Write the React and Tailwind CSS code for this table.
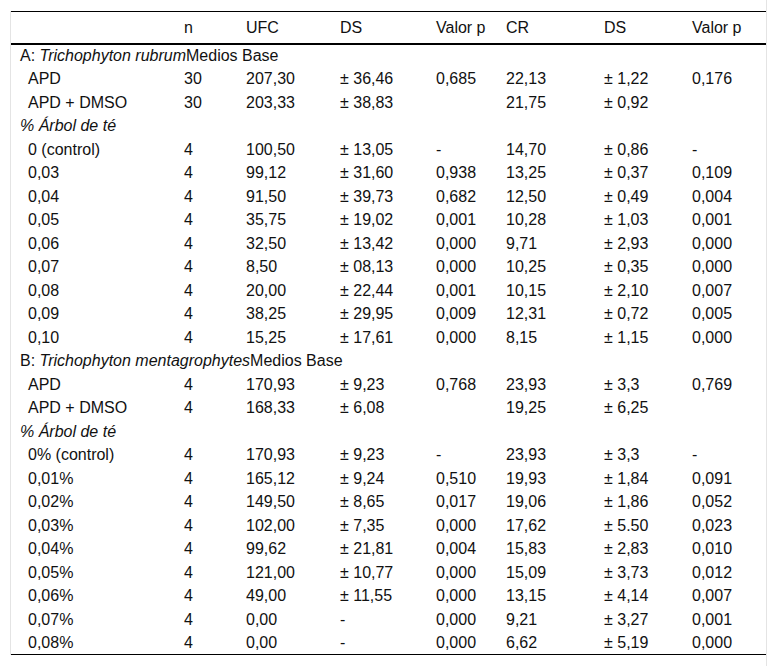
const cols = [173, 62, 94, 96, 70, 98, 88, 74];

const headers = ["", "n", "UFC", "DS", "Valor p", "CR", "DS", "Valor p"];

// section A rows
const rubrumBase = [
  ["APD", "30", "207,30", "± 36,46", "0,685", "22,13", "± 1,22", "0,176"],
  ["APD + DMSO", "30", "203,33", "± 38,83", "", "21,75", "± 0,92", ""],
];
const rubrumTea = [
  ["0 (control)", "4", "100,50", "± 13,05", "-", "14,70", "± 0,86", "-"],
  ["0,03", "4", "99,12", "± 31,60", "0,938", "13,25", "± 0,37", "0,109"],
  ["0,04", "4", "91,50", "± 39,73", "0,682", "12,50", "± 0,49", "0,004"],
  ["0,05", "4", "35,75", "± 19,02", "0,001", "10,28", "± 1,03", "0,001"],
  ["0,06", "4", "32,50", "± 13,42", "0,000", "9,71", "± 2,93", "0,000"],
  ["0,07", "4", "8,50", "± 08,13", "0,000", "10,25", "± 0,35", "0,000"],
  ["0,08", "4", "20,00", "± 22,44", "0,001", "10,15", "± 2,10", "0,007"],
  ["0,09", "4", "38,25", "± 29,95", "0,009", "12,31", "± 0,72", "0,005"],
  ["0,10", "4", "15,25", "± 17,61", "0,000", "8,15", "± 1,15", "0,000"],
];

// section B rows
const mentaBase = [
  ["APD", "4", "170,93", "± 9,23", "0,768", "23,93", "± 3,3", "0,769"],
  ["APD + DMSO", "4", "168,33", "± 6,08", "", "19,25", "± 6,25", ""],
];
const mentaTea = [
  ["0% (control)", "4", "170,93", "± 9,23", "-", "23,93", "± 3,3", "-"],
  ["0,01%", "4", "165,12", "± 9,24", "0,510", "19,93", "± 1,84", "0,091"],
  ["0,02%", "4", "149,50", "± 8,65", "0,017", "19,06", "± 1,86", "0,052"],
  ["0,03%", "4", "102,00", "± 7,35", "0,000", "17,62", "± 5.50", "0,023"],
  ["0,04%", "4", "99,62", "± 21,81", "0,004", "15,83", "± 2,83", "0,010"],
  ["0,05%", "4", "121,00", "± 10,77", "0,000", "15,09", "± 3,73", "0,012"],
  ["0,06%", "4", "49,00", "± 11,55", "0,000", "13,15", "± 4,14", "0,007"],
  ["0,07%", "4", "0,00", "-", "0,000", "9,21", "± 3,27", "0,001"],
  ["0,08%", "4", "0,00", "-", "0,000", "6,62", "± 5,19", "0,000"],
];

const DataRow = ({ row }) => (
  <tr className="h-[23.5px]">
    {row.map((cell, i) => (
      <td
        key={i}
        className={`p-0 align-middle whitespace-nowrap ${i === 0 ? "pl-[17px]" : ""}`}
      >
        {cell}
      </td>
    ))}
  </tr>
);

const TitleRow = ({ children }) => (
  <tr className="h-[23.5px]">
    <td colSpan={8} className="p-0 pl-[9px] align-middle whitespace-nowrap">
      {children}
    </td>
  </tr>
);

const Section = ({ letter, species, base, tea }) => (
  <>
    <TitleRow>
      {letter}: <i>{species}</i>Medios Base
    </TitleRow>
    {base.map((r, i) => (
      <DataRow key={"b" + i} row={r} />
    ))}
    <TitleRow>
      <i>% Árbol de té</i>
    </TitleRow>
    {tea.map((r, i) => (
      <DataRow key={"t" + i} row={r} />
    ))}
  </>
);

export default function App() {
  return (
    <div
      className="w-[767px] h-[666px] border-r border-[#e4e4e4] bg-white pl-[10px] pt-[11px] text-[16px] leading-[19px] text-[#111]"
      style={{ fontFamily: '"Liberation Sans", Arial, sans-serif' }}
    >
      <div className="w-[756px] border-l border-[#e4e4e4]">
        <table className="w-[755px] table-fixed border-collapse border-t border-b border-black">
          <colgroup>
            {cols.map((w, i) => (
              <col key={i} style={{ width: w }} />
            ))}
          </colgroup>
          <thead>
            <tr className="h-[32px] border-b-2 border-black">
              {headers.map((h, i) => (
                <th key={i} className="p-0 text-left font-normal align-middle whitespace-nowrap">
                  {h}
                </th>
              ))}
            </tr>
          </thead>
          <tbody>
            <Section letter="A" species="Trichophyton rubrum" base={rubrumBase} tea={rubrumTea} />
            <Section letter="B" species="Trichophyton mentagrophytes" base={mentaBase} tea={mentaTea} />
          </tbody>
        </table>
      </div>
    </div>
  );
}
